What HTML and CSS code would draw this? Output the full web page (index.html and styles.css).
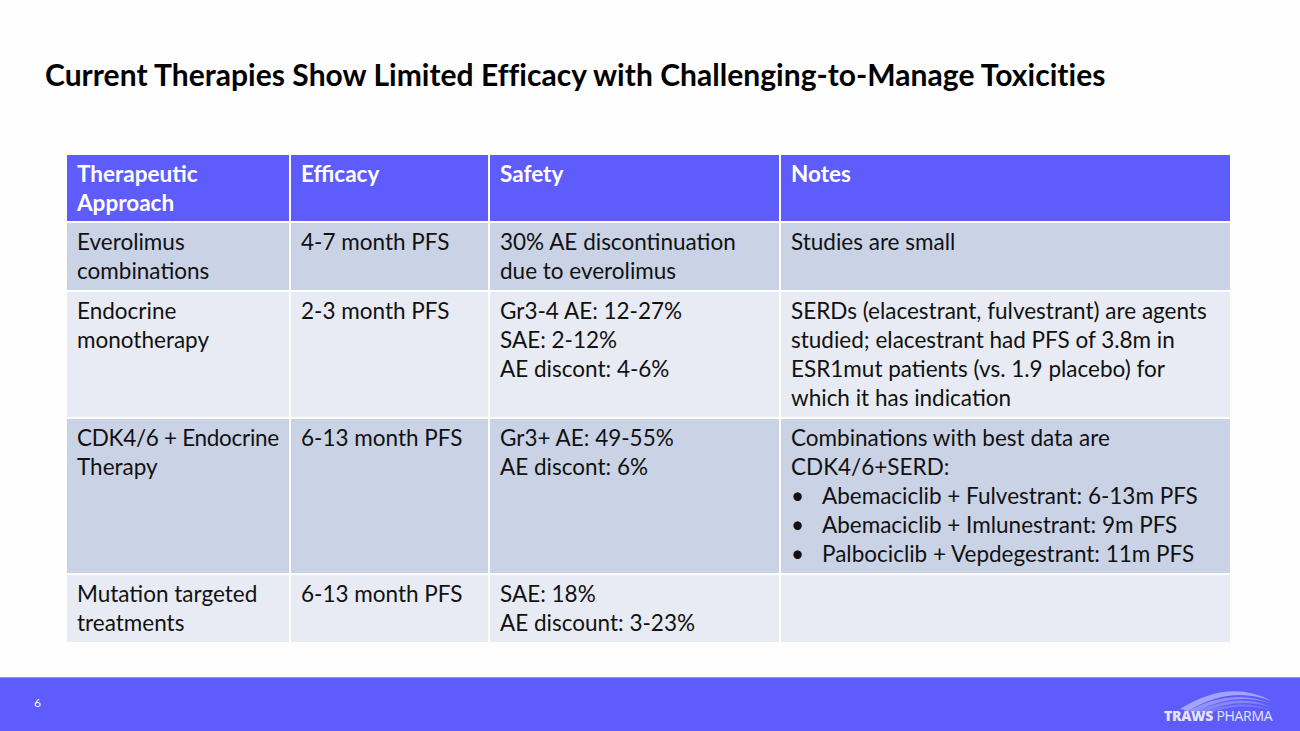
FILE: index.html
```html
<!DOCTYPE html>
<html>
<head>
<meta charset="utf-8">
<link rel="stylesheet" href="styles.css">
</head>
<body>
<div class="slide">
  <main class="content">
    <h1 class="title">Current Therapies Show Limited Efficacy with Challenging-to-Manage Toxicities</h1>
    <table class="grid">
      <colgroup>
        <col class="c1"><col class="c2"><col class="c3"><col class="c4">
      </colgroup>
      <thead>
        <tr class="head">
          <th>Therapeutic Approach</th>
          <th>Efficacy</th>
          <th>Safety</th>
          <th>Notes</th>
        </tr>
      </thead>
      <tbody>
        <tr class="odd r1">
          <td>Everolimus combinations</td>
          <td>4-7 month PFS</td>
          <td>30% AE discontinuation due to everolimus</td>
          <td>Studies are small</td>
        </tr>
        <tr class="even r2">
          <td>Endocrine monotherapy</td>
          <td>2-3 month PFS</td>
          <td>Gr3-4 AE: 12-27%<br>SAE: 2-12%<br>AE discont: 4-6%</td>
          <td>SERDs (elacestrant, fulvestrant) are agents studied; elacestrant had PFS of 3.8m in ESR1mut patients (vs. 1.9 placebo) for which it has indication</td>
        </tr>
        <tr class="odd r3">
          <td><span class="keep">CDK4/6 + Endocrine</span> Therapy</td>
          <td>6-13 month PFS</td>
          <td>Gr3+ AE: 49-55%<br>AE discont: 6%</td>
          <td>Combinations with best data are CDK4/6+SERD:
            <ul class="bullets">
              <li>Abemaciclib + Fulvestrant: 6-13m PFS</li>
              <li>Abemaciclib + Imlunestrant: 9m PFS</li>
              <li>Palbociclib + Vepdegestrant: 11m PFS</li>
            </ul>
          </td>
        </tr>
        <tr class="even r4">
          <td>Mutation targeted treatments</td>
          <td>6-13 month PFS</td>
          <td>SAE: 18%<br>AE discount: 3-23%</td>
          <td></td>
        </tr>
      </tbody>
    </table>
  </main>
  <footer class="footer">
    <span class="page-num">6</span>
    <div class="logo">
      <svg class="swoosh" width="100" height="26" viewBox="0 0 100 26">
        <path d="M6 23 Q 55 -8 98 15 Q 56 -1 14 25 Z" fill="#b0b0fb" opacity="0.85"/>
        <path d="M14 25 Q 58 1 98 18 Q 60 5 22 26 Z" fill="#a0a0f9" opacity="0.8"/>
        <path d="M22 26 Q 62 6 97 21 Q 64 11 30 26 Z" fill="#9494f8" opacity="0.75"/>
        <path d="M30 26 Q 66 12 96 24 Q 68 16 38 26 Z" fill="#8888f6" opacity="0.7"/>
      </svg>
      <span class="logo-text"><b>TRAWS</b> PHARMA</span>
    </div>
  </footer>
</div>
</body>
</html>
```
FILE: styles.css
```css
html, body {
  margin: 0;
  padding: 0;
  background: #fefefe;
}
.slide {
  width: 1300px;
  height: 731px;
  display: flex;
  flex-direction: column;
  overflow: hidden;
  font-family: Lato, "Open Sans", "Liberation Sans", sans-serif;
}
.content {
  flex: 1;
  padding: 0 0 0 45px;
}
.title {
  margin: 55px 0 0 0;
  font-size: 30px;
  line-height: 38px;
  font-weight: 700;
  color: #000;
  letter-spacing: 0.03px;
}
.grid {
  margin: 62px 0 0 22px;
  border-collapse: collapse;
  table-layout: fixed;
  width: 1163px;
  font-size: 22.5px;
  line-height: 29px;
  color: #111;
}
.c1 { width: 223px; }
.c2 { width: 199px; }
.c3 { width: 291px; }
.c4 { width: 450px; }
.grid th, .grid td {
  vertical-align: top;
  text-align: left;
  padding: 4px 9px 5px 10px;
  border: 2px solid #ffffff;
}
.grid tr > :first-child { border-left: none; padding-right: 3px; }
.grid tr > :last-child { border-right: none; }
.keep {
  white-space: nowrap;
  letter-spacing: -0.3px;
}
.head th {
  background: #5e5cfc;
  color: #ffffff;
  font-weight: 700;
  border-top: none;
  padding-bottom: 4px;
}
.odd td { background: #cad3e6; }
.even td { background: #e8ebf3; }
.r4 td { border-bottom: none; }
.bullets {
  list-style: none;
  margin: 0;
  padding: 0 0 0 31px;
}
.bullets li {
  position: relative;
}
.bullets li::before {
  content: "•";
  position: absolute;
  left: -31px;
  top: 0;
}
.footer {
  height: 53px;
  background: #5e5cfc;
  border-top: 1px solid #9a9ac8;
  display: flex;
  align-items: center;
  justify-content: space-between;
  padding: 0 28px 0 34px;
}
.page-num {
  color: #ffffff;
  font-size: 12px;
  margin-top: -4px;
}
.logo {
  position: relative;
  width: 108px;
  height: 44px;
  margin-top: 6px;
}
.swoosh {
  position: absolute;
  left: 10px;
  top: 0;
}
.logo-text {
  position: absolute;
  left: 0;
  bottom: 5px;
  font-family: "Open Sans", "Liberation Sans", sans-serif;
  font-size: 14px;
  color: #e4e4ff;
  white-space: nowrap;
  letter-spacing: -0.3px;
}
.logo-text b {
  font-weight: 800;
}
```
